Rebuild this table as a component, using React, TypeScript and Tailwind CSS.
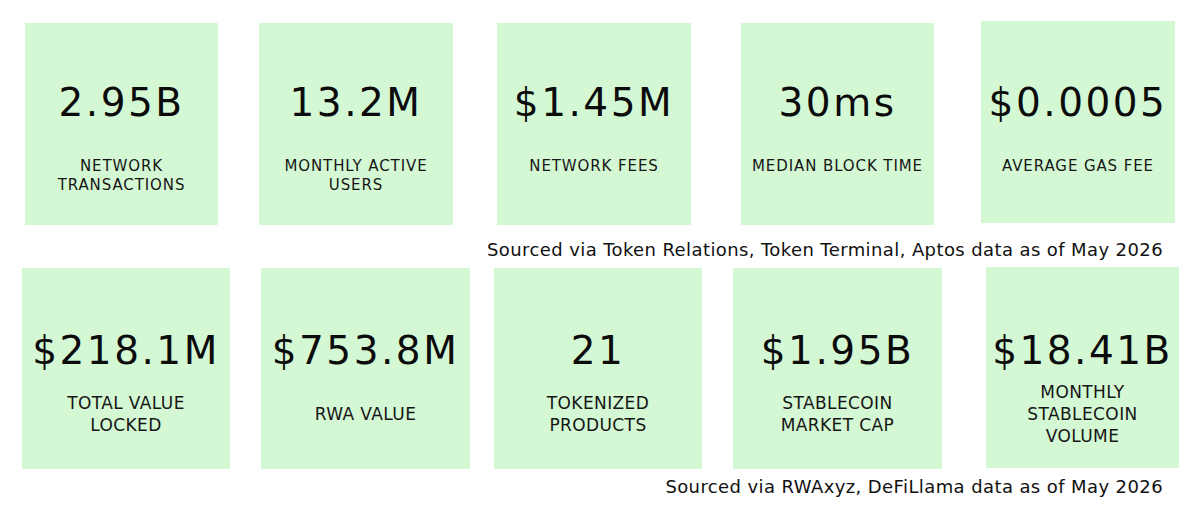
type Stat = {
  value: string;
  label: string[];
  box: string;
  pad: string;
};

// top row: network stats
const networkStats: Stat[] = [
  { value: "2.95B", label: ["NETWORK", "TRANSACTIONS"], box: "ml-[25px] mt-[2px] w-[193px]", pad: "pt-[60px]" },
  { value: "13.2M", label: ["MONTHLY ACTIVE", "USERS"], box: "ml-[41px] mt-[2px] w-[194px]", pad: "pt-[60px]" },
  { value: "$1.45M", label: ["NETWORK FEES"], box: "ml-[44px] mt-[2px] w-[194px]", pad: "pt-[60px]" },
  { value: "30ms", label: ["MEDIAN BLOCK TIME"], box: "ml-[50px] mt-[2px] w-[193px]", pad: "pt-[60px]" },
  { value: "$0.0005", label: ["AVERAGE GAS FEE"], box: "ml-[47px] mt-0 w-[194px]", pad: "pt-[62px]" },
];

// bottom row: DeFi / RWA stats
const defiStats: Stat[] = [
  { value: "$218.1M", label: ["TOTAL VALUE", "LOCKED"], box: "ml-[22px] mt-[1px] w-[208px]", pad: "pt-[63px]" },
  { value: "$753.8M", label: ["RWA VALUE"], box: "ml-[31px] mt-[1px] w-[209px]", pad: "pt-[63px]" },
  { value: "21", label: ["TOKENIZED", "PRODUCTS"], box: "ml-[24px] mt-[1px] w-[208px]", pad: "pt-[63px]" },
  { value: "$1.95B", label: ["STABLECOIN", "MARKET CAP"], box: "ml-[31px] mt-[1px] w-[209px]", pad: "pt-[63px]" },
  { value: "$18.41B", label: ["MONTHLY", "STABLECOIN", "VOLUME"], box: "ml-[44px] mt-0 w-[193px]", pad: "pt-[64px]" },
];

function TopCard({ stat }: { stat: Stat }) {
  return (
    <div className={`${stat.box} ${stat.pad} h-[202px] shrink-0 bg-[#d4f8d4] flex flex-col items-center text-center`}>
      <div className="text-[39px] leading-[39px] text-[#0b0b0b] tracking-[2.5px] whitespace-nowrap">{stat.value}</div>
      <div className="mt-[35px] text-[15px] leading-[19px] tracking-[0.9px] text-[#161616]">
        {stat.label.map((line) => (
          <div key={line}>{line}</div>
        ))}
      </div>
    </div>
  );
}

function BottomCard({ stat }: { stat: Stat }) {
  return (
    <div className={`${stat.box} ${stat.pad} h-[201px] shrink-0 bg-[#d4f8d4] flex flex-col items-center text-center`}>
      <div className="text-[39px] leading-[39px] text-[#0b0b0b] tracking-[2.5px] whitespace-nowrap">{stat.value}</div>
      <div className="mt-[9px] h-[70px] flex flex-col justify-center text-[17px] leading-[22px] tracking-[0.4px] text-[#161616]">
        {stat.label.map((line) => (
          <div key={line}>{line}</div>
        ))}
      </div>
    </div>
  );
}

export default function App() {
  return (
    <div className="w-[1200px] h-[514px] overflow-hidden bg-white font-['DejaVu_Sans','Inter',sans-serif]">
      <div className="flex items-start pt-[21px]">
        {networkStats.map((s) => (
          <TopCard key={s.value} stat={s} />
        ))}
      </div>

      <div className="mt-[15px] flex justify-end pr-[37px] text-[18px] leading-[20px] tracking-[0.4px] text-[#111111]">
        Sourced via Token Relations, Token Terminal, Aptos data as of May 2026
      </div>

      <div className="mt-[7px] flex items-start">
        {defiStats.map((s) => (
          <BottomCard key={s.value} stat={s} />
        ))}
      </div>

      <div className="mt-[8px] flex justify-end pr-[37px] text-[18px] leading-[20px] tracking-[0.4px] text-[#111111]">
        Sourced via RWAxyz, DeFiLlama data as of May 2026
      </div>
    </div>
  );
}
